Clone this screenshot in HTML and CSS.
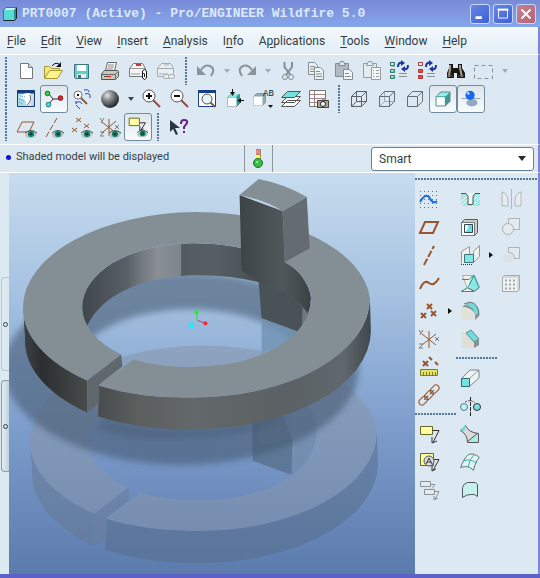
FILE: index.html
```
<!DOCTYPE html>
<html lang="en">
<head>
<meta charset="utf-8">
<title>PRT0007 (Active) - Pro/ENGINEER Wildfire 5.0</title>
<link rel="stylesheet" href="styles.css">
</head>
<body>
<svg class="defs" aria-hidden="true">
  <defs>
    <symbol id="eye" viewBox="0 0 12 10"><path d="M0 5Q6-1 12 4L10 8Q5 10 1 8Z" fill="#b9c4c0"/><path d="M0 4Q6-1 12 4" fill="none" stroke="#4c5654"/><circle cx="6" cy="5" r="3" fill="#087a68"/><circle cx="6" cy="5" r="1" fill="#022"/></symbol>
    <symbol id="swap" viewBox="0 0 14 12"><path d="M2 7Q2 2 6 3M12 5Q12 10 8 9" fill="none" stroke="#1c35a5" stroke-width="2"/><path d="M5 0l4 3-4 3zM9 6l-4 3 4 3z" fill="#1c35a5"/></symbol>
  </defs>
</svg>
<div class="window">
  <header class="titlebar">
    <svg class="app-icon" viewBox="0 0 14 14"><path d="M1 3h10v10H1z" fill="#56dcd3"/><path d="M1 3l2-2h10l-2 2z" fill="#c5f6f0"/><path d="M11 3l2-2v10l-2 2z" fill="#2b8d93"/><path d="M.5 13.500h11l2-2V.500" fill="none" stroke="#122"/><path d="M.5 13V3L3 .500h10" fill="none" stroke="#456f88"/></svg>
    <h1>PRT0007 (Active) - Pro/ENGINEER Wildfire 5.0</h1>
    <div class="caption">
      <button aria-label="Minimize"><svg viewBox="0 0 20 20"><path d="M5 14h7" stroke="#fff" stroke-width="3"/></svg></button>
      <button aria-label="Maximize"><svg viewBox="0 0 20 20"><path d="M5 5.500h10v9H5z" fill="none" stroke="#fff"/><path d="M4 5h12" stroke="#fff" stroke-width="2"/></svg></button>
      <button class="close" aria-label="Close"><svg viewBox="0 0 20 20"><path d="M5 5l10 10M15 5L5 15" stroke="#fff" stroke-width="2"/></svg></button>
    </div>
  </header>
  <nav class="menu">
    <a href="#"><u>F</u>ile</a><a href="#"><u>E</u>dit</a><a href="#"><u>V</u>iew</a><a href="#"><u>I</u>nsert</a><a href="#"><u>A</u>nalysis</a><a href="#">I<u>n</u>fo</a><a href="#">A<u>p</u>plications</a><a href="#"><u>T</u>ools</a><a href="#"><u>W</u>indow</a><a href="#"><u>H</u>elp</a>
  </nav>
  <div class="toolbars">
    <div class="bar">
      <span class="grip"></span>
      <button class="tool" aria-label="New"><svg viewBox="0 0 28 28"><path d="M8.500 6.500h8l4 4v11h-12z" fill="#fff" stroke="#777"/><path d="M16.500 6.500v4h4" fill="#ddd" stroke="#777"/></svg></button>
      <button class="tool" aria-label="Open"><svg viewBox="0 0 28 28"><path d="M4.500 21.500v-12h5l2 2h8v3" fill="#f3e877" stroke="#a79635"/><path d="M4.500 21.500l5-8h13l-5 8z" fill="#fff489" stroke="#a79635"/><path d="M12 9q4-5 8-1" fill="none" stroke="#111"/><path d="M21 5v5h-5z" fill="#111"/></svg></button>
      <button class="tool" aria-label="Save"><svg viewBox="0 0 28 28"><path d="M6.500 7.500h14v14h-13l-1-1z" fill="#5bd0cf" stroke="#456f7c"/><path d="M9 8h9v6H9z" fill="#fff"/><path d="M9 17h9v4H9z" fill="#e4eff0"/><path d="M10 18h3v3h-3z" fill="#456f7c"/></svg></button>
      <button class="tool" aria-label="Print"><svg viewBox="0 0 28 28"><path d="M9.500 14l2-8.500h9l-2 8.500" fill="#fff" stroke="#666"/><path d="M12 8h6M12 10h6M11 12h6" stroke="#888"/><path d="M5.500 17l3-3.500h13l1 1v5l-3 3h-14z" fill="#c9c7bd" stroke="#555"/><path d="M6 17.500h13l3-3M19.500 17.500v4" fill="none" stroke="#666"/><path d="M8 19.500h2" stroke="#087c35"/><path d="M10 19.500h5" stroke="#c31c1c"/></svg></button>
      <button class="tool" aria-label="Mail attachment"><svg viewBox="0 0 28 28"><path d="M5.500 19.500v-8l4-5h9l3 5v8z" fill="#f6f6f6" stroke="#777"/><path d="M5.500 11.500h16M7 17h9" stroke="#999"/><path d="M12 8h5" stroke="#c43939" stroke-width="2"/><path d="M18.500 19v-5q2-3 4 0v7q-2 3-4 0v-4q1-2 2 0v3" fill="#fff" stroke="#111"/></svg></button>
      <button class="tool" aria-label="Mail link"><svg viewBox="0 0 28 28"><g fill="#e9eef1" stroke="#a4abb0"><path d="M5.500 19.500v-8l4-5h9l3 5v8z"/><path d="M5.500 11.500h16M7 17h9"/><path d="M12 8h5"/><rect x="11.500" y="17.500" width="6" height="4" rx="2"/><rect x="16.500" y="17.500" width="6" height="4" rx="2"/></g></svg></button>
      <span class="grip"></span>
      <button class="tool" aria-label="Undo"><svg viewBox="0 0 28 28"><path d="M9 13q4-6 9-4 6 3 1 10" fill="none" stroke="#8c949a" stroke-width="2"/><path d="M5 9v9h9z" fill="#8c949a"/></svg></button>
      <button class="drop off" aria-label="Undo list"></button>
      <button class="tool" aria-label="Redo"><svg viewBox="0 0 28 28"><path d="M19 13q-4-6-9-4-6 3-1 10" fill="none" stroke="#8c949a" stroke-width="2"/><path d="M23 9v9h-9z" fill="#8c949a"/></svg></button>
      <button class="drop off" aria-label="Redo list"></button>
      <button class="tool" aria-label="Cut"><svg viewBox="0 0 28 28"><g fill="none" stroke="#858d93"><path d="M10.500 5v5l6 8M18 5v5l-6 8" stroke-width="2"/><circle cx="11" cy="20" r="2.500"/><circle cx="17" cy="20" r="2.500"/></g></svg></button>
      <button class="tool" aria-label="Copy"><svg viewBox="0 0 28 28"><g fill="#edf2f5" stroke="#858d93"><path d="M6.500 5.500h6l3 3v9h-9z"/><path d="M8 9.500h5M8 12h5M8 14.500h5"/><path d="M12.500 10.500h6l3 3v9h-9z"/><path d="M14 14.500h4M14 17h6M14 19.500h6"/></g></svg></button>
      <button class="tool" aria-label="Paste"><svg viewBox="0 0 28 28"><g stroke="#858d93"><path d="M5.500 6.500h13v13h-13z" fill="#b1bac0"/><path d="M8.500 8.500l2-4h3l2 4z" fill="#dde3e6"/><path d="M13.500 12.500h6l3 3v7h-9z" fill="#f1f5f7"/><path d="M15 16.500h4M15 19.500h6"/></g></svg></button>
      <button class="tool" aria-label="Paste special"><svg viewBox="0 0 28 28"><g fill="#e5ecef" stroke="#959ca1"><path d="M5.500 6.500h13v14h-13z"/><path d="M8.500 8.500l2-4h3l2 4z"/><path d="M13.500 10.500h9v12h-9z" fill="#f5f7f8"/><path d="M15 13.500h1M18 13.500h3M15 16.500h1M18 16.500h3M15 19.500h1M18 19.500h3"/></g></svg></button>
      <button class="tool" aria-label="Regenerate"><svg viewBox="0 0 28 28"><g fill="#eef" stroke="#35685d"><path d="M4.500 5.500h4v3h-4zM4.500 12.500h4v3h-4zM4.500 18.500h4v3h-4z"/></g><path d="M5 9h4M5 15h4M5 21h4M8 5v4M8 12v4M8 18v4" stroke="#18a67a"/><path d="M13 16.500h8M13 19.500h8" stroke="#8a9298"/><use href="#swap" x="10" y="3" width="14" height="12"/></svg></button>
      <button class="tool" aria-label="Regenerate manager"><svg viewBox="0 0 28 28"><g stroke="#b83434"><path d="M4.500 5.500h4v3h-4z" fill="#fff"/><path d="M4.500 12.500h4v3h-4zM4.500 18.500h4v3h-4z" fill="#ec4545"/></g><path d="M13 16.500h8M13 19.500h8" stroke="#8a9298"/><use href="#swap" x="10" y="3" width="14" height="12"/></svg></button>
      <button class="tool" aria-label="Find"><svg viewBox="0 0 28 28"><path d="M7 7h4v4h5V7h4v4l3 5v5h-8v-5h-3v5H5v-5l2-5z" fill="#191715"/><path d="M8 8v3l-1 9M18 8v3l2 9" fill="none" stroke="#aaa092" stroke-width="2"/><path d="M5 19h6M16 19h6" stroke="#62594c"/></svg></button>
      <button class="tool" aria-label="Select"><svg viewBox="0 0 28 28"><path d="M4.500 8.500h18v13h-18z" fill="none" stroke="#8b9297" stroke-dasharray="4 3"/></svg></button>
      <button class="drop off" aria-label="Selection list"></button>
    </div>
    <div class="bar">
      <span class="grip"></span>
      <button class="tool" aria-label="Repaint"><svg viewBox="0 0 28 28"><path d="M5.500 5.500h17v16h-17z" fill="#a9dcea" stroke="#173b7b"/><path d="M5 7h18" stroke="#173b7b" stroke-width="3"/><path d="M7 12q8-6 12-3l3 1-3 11-5-1q1-6-7-8z" fill="#fff"/><path d="M18 9l4 1-2 11h-4q4-5 2-12" fill="#d5dde0"/><path d="M18 10q2 6-3 10" fill="none" stroke="#58727d"/><path d="M8 11l5 1M7 14l5 2M7 17l4 2" stroke="#5d93c8" stroke-dasharray="1 1"/></svg></button>
      <button class="tool on" aria-label="Spin center"><svg viewBox="0 0 28 28"><path d="M8 8l5 6h7M13 14l-5 6" fill="none" stroke="#222"/><circle cx="7" cy="8" r="2.500" fill="#35d33d" stroke="#176a1b"/><circle cx="21" cy="13" r="2.500" fill="#e42626" stroke="#711"/><circle cx="8" cy="20" r="2.500" fill="#42dce4" stroke="#16707b"/></svg></button>
      <button class="tool" aria-label="Orient mode"><svg viewBox="0 0 28 28"><circle cx="10" cy="10" r="4" fill="#fff" stroke="#777"/><path d="M13 13l6 6" stroke="#8b5b38" stroke-width="2"/><path d="M16 5q5-1 5 2M17 9q6-2 5 4M8 18q4-3 6 1M8 19v-3M8 20l4 4" fill="none" stroke="#2842b4"/><path d="M9 10h2" stroke="#111" stroke-width="2"/></svg></button>
      <button class="tool" aria-label="Appearance"><svg viewBox="0 0 28 28"><defs><radialGradient id="ball" cx=".35" cy=".3" r=".7"><stop stop-color="#e3e3e3"/><stop offset=".4" stop-color="#878b8e"/><stop offset="1" stop-color="#25282a"/></radialGradient></defs><circle cx="14" cy="14" r="9" fill="url(#ball)"/></svg></button>
      <button class="drop" aria-label="Appearance list"></button>
      <button class="tool" aria-label="Zoom in"><svg viewBox="0 0 28 28"><path d="M16 15l7 7" stroke="#8b5048" stroke-width="2"/><circle cx="12" cy="11" r="6" fill="#fff" stroke="#555"/><path d="M9 11h6M12 8v6" stroke="#111" stroke-width="2"/></svg></button>
      <button class="tool" aria-label="Zoom out"><svg viewBox="0 0 28 28"><path d="M16 15l7 7" stroke="#8b5048" stroke-width="2"/><circle cx="12" cy="11" r="6" fill="#fff" stroke="#555"/><path d="M9 11h6" stroke="#111" stroke-width="2"/></svg></button>
      <button class="tool" aria-label="Refit"><svg viewBox="0 0 28 28"><path d="M5.500 5.500h17v16h-17z" fill="#fff" stroke="#183b8a"/><path d="M5 6.500h18" stroke="#183b8a" stroke-width="3"/><path d="M17 17l5 5" stroke="#8b5048" stroke-width="2"/><circle cx="14" cy="14" r="5" fill="#e8f3f6" stroke="#555"/></svg></button>
      <button class="tool" aria-label="Reorient"><svg viewBox="0 0 28 28"><path d="M6.500 12.500l3-3h9v9l-3 3h-9z" fill="#2c9c9a" stroke="#777"/><path d="M6.500 12.500h9v9h-9z" fill="#fff"/><path d="M7 12l3-3h8l-3 3z" fill="#87e7e2"/><path d="M11.500 4v5M23 15.500h-4" stroke="#111"/><path d="M9 7h5l-2.500 4zM20 13v5l-4-2.500z" fill="#111"/></svg></button>
      <button class="tool" aria-label="Saved views"><svg viewBox="0 0 28 28"><path d="M4.500 11.500l3-3h9v9l-3 3h-9z" fill="#92aaad" stroke="#999"/><path d="M4.500 11.500h9v9h-9z" fill="#fff"/><text x="14" y="11" class="icon-label">AB</text><path d="M19 20h5l-2.500 3z" fill="#111"/></svg></button>
      <button class="tool" aria-label="Layers"><svg viewBox="0 0 28 28"><path d="M4.500 21.500l6-6h13l-6 6zM4.500 17.500l6-6h13l-6 6z" fill="#fff" stroke="#555"/><path d="M4.500 12.500l6-6h13l-6 6z" fill="#75e1dd" stroke="#4c5858"/></svg></button>
      <button class="tool" aria-label="View manager"><svg viewBox="0 0 28 28"><path d="M4.500 5.500h16v16h-16z" fill="#fff" stroke="#777"/><path d="M5 9.500h15M5 13.500h15M5 17.500h15M9.500 6v15" stroke="#a18185"/><path d="M12 16h4l1-2h4l1 2h2v7H12z" fill="#aaa58c"/><path d="M12.500 15.500h11v7h-11z" fill="none" stroke="#444"/><circle cx="18" cy="19" r="2.500" fill="#fff" stroke="#222"/></svg></button>
      <span class="grip"></span>
      <button class="tool" aria-label="Wireframe"><svg viewBox="0 0 28 28"><path d="M6.500 11.500h10v10h-10zM11.500 6.500h10v10h-10zM6.500 11.500l5-5M16.500 11.500l5-5M16.500 21.500l5-5M6.500 21.500l5-5" fill="none" stroke="#5b6369"/></svg></button>
      <button class="tool" aria-label="Hidden line"><svg viewBox="0 0 28 28"><path d="M11.500 6v10.500h10M6.500 21.500l5-5" fill="none" stroke="#a4aaaf"/><path d="M6.500 11.500h10v10h-10zl5-5h10v10l-5 5M16.500 11.500l5-5" fill="none" stroke="#666e74"/></svg></button>
      <button class="tool" aria-label="No hidden"><svg viewBox="0 0 28 28"><path d="M6.500 11.500h10v10h-10zl5-5h10v10l-5 5M16.500 11.500l5-5" fill="none" stroke="#666e74"/></svg></button>
      <button class="tool on" aria-label="Shading"><svg viewBox="0 0 28 28"><path d="M6.500 11.500l5-5h10v10l-5 5h-10z" fill="#3f9a97" stroke="#57777a"/><path d="M7 12h9v9H7z" fill="#fff"/><path d="M7 11l5-4h9l-4 4z" fill="#91f1e7"/></svg></button>
      <button class="tool on" aria-label="Enhanced realism"><svg viewBox="0 0 28 28"><ellipse cx="15" cy="18" rx="6" ry="4" fill="#8ea8c5"/><path d="M4 13.500h20" stroke="#8f9aa2"/><circle cx="13" cy="10" r="5" fill="#1768ee"/><circle cx="11" cy="8" r="1.500" fill="#b0dcff"/></svg></button>
    </div>
    <div class="bar">
      <span class="grip"></span>
      <button class="tool" aria-label="Plane display"><svg viewBox="0 0 28 28"><path d="M5 19l5-10h12l-5 10z" fill="none" stroke="#9a552e"/><use href="#eye" x="13" y="16" width="12" height="10"/></svg></button>
      <button class="tool" aria-label="Axis display"><svg viewBox="0 0 28 28"><path d="M6 24L17 5" stroke="#9a552e" stroke-dasharray="6 2"/><use href="#eye" x="12" y="16" width="12" height="10"/></svg></button>
      <button class="tool" aria-label="Point display"><svg viewBox="0 0 28 28"><path d="M8 5l5 4M13 5l-5 4M4 15l5 4M9 15l-5 4M16 11l5 4M21 11l-5 4" stroke="#9a552e"/><use href="#eye" x="13" y="16" width="12" height="10"/></svg></button>
      <button class="tool" aria-label="Coordinate display"><svg viewBox="0 0 28 28"><path d="M13 6v17M6 20L20 8M6 9l14 11" stroke="#9a552e"/><path d="M4 5l2 3M8 5l-3 5M19 12l4 4M23 12l-4 4M4 19h4l-4 4h4" fill="none" stroke="#777f84"/><use href="#eye" x="13" y="16" width="12" height="10"/></svg></button>
      <button class="tool on" aria-label="Annotation display"><svg viewBox="0 0 28 28"><path d="M4.500 4.500h11v8h-11z" fill="#fffda4" stroke="#626421"/><path d="M16 9.500h6l-5 8M16 13v5l4-2" fill="none" stroke="#222"/><use href="#eye" x="13" y="16" width="12" height="10"/></svg></button>
      <span class="grip"></span>
      <button class="tool" aria-label="Context help"><svg viewBox="0 0 28 28"><path d="M6 7v12l3-3 3 6 2-1-3-6h5z" fill="#29363d"/><path d="M17 11q0-4 3-4 4 0 3 3l-3 4v2M20 18v2" fill="none" stroke="#701b81" stroke-width="2"/></svg></button>
    </div>
  </div>
  <div class="status">
    <p><span class="dot"></span>Shaded model will be displayed</p>
    <div class="lamp"><svg viewBox="0 0 14 22"><path d="M5 1h5v10H5z" fill="#a78d59"/><path d="M5 2h4v4H5z" fill="#e9868b"/><path d="M5 7h4v4H5z" fill="#fff56a"/><circle cx="7" cy="15" r="4.500" fill="#3cbd4b" stroke="#167026"/><circle cx="6" cy="14" r="1" fill="#a3f7a5"/></svg></div>
    <div class="filter"><select aria-label="Selection filter"><option>Smart</option></select></div>
  </div>
  <main class="work">
    <aside class="sashes"><button class="sash plain" aria-label="Open browser"></button><button class="sash" aria-label="Open model tree"></button></aside>
    <svg class="model" viewBox="9 173 406 400" preserveAspectRatio="xMinYMin slice" role="img" aria-label="Split ring model">
      <defs>
        <linearGradient id="sky" x2="0" y2="1"><stop stop-color="#c7dcef"/><stop offset=".32" stop-color="#a3c0e0"/><stop offset=".65" stop-color="#7b9bcb"/><stop offset="1" stop-color="#5a7bac"/></linearGradient>
        <linearGradient id="wall" gradientUnits="userSpaceOnUse" x1="82" x2="310" y1="0" y2="0"><stop stop-color="#3f474c"/><stop offset=".2" stop-color="#596167"/><stop offset=".24" stop-color="#6c7378"/><stop offset=".33" stop-color="#898f94"/><stop offset=".43" stop-color="#7f868b"/><stop offset=".435" stop-color="#535b60"/><stop offset=".58" stop-color="#575f64"/><stop offset=".8" stop-color="#454d51"/><stop offset="1" stop-color="#292d30"/></linearGradient>
        <linearGradient id="rim" gradientUnits="userSpaceOnUse" x1="98" x2="370" y1="0" y2="0"><stop stop-color="#484c4d"/><stop offset=".15" stop-color="#5c5f5e"/><stop offset=".35" stop-color="#63686a"/><stop offset=".7" stop-color="#5b6164"/><stop offset=".9" stop-color="#60686d"/><stop offset="1" stop-color="#41484b"/></linearGradient>
        <linearGradient id="rimLeft" x2="1"><stop stop-color="#3c4143"/><stop offset=".3" stop-color="#2b2f31"/><stop offset="1" stop-color="#484b4a"/></linearGradient>
        <linearGradient id="post" x2="1"><stop stop-color="#3d4447"/><stop offset=".6" stop-color="#50585c"/><stop offset="1" stop-color="#3b4245"/></linearGradient>
        <filter id="soft" x="-10%" y="-10%" width="120%" height="120%"><feGaussianBlur stdDeviation="3"/></filter>
        <path id="face" d="M87 380A173 93 0 0 1 23 307A175 95 0 0 1 196 212A175 92 0 0 1 369 298A177 99 0 0 1 190 397A175 93 0 0 1 98 385L133 359A114 62 0 0 0 200 366A113 67 0 0 0 310 298A118 56 0 0 0 190 243A110 64 0 0 0 82 307A114 62 0 0 0 121 354Z"/>
        <path id="rimFront" d="M98 385A175 93 0 0 0 190 397A177 99 0 0 0 369 298L370 331A179 99 0 0 1 190 429A175 93 0 0 1 98 416Z"/>
        <path id="rimSide" d="M23 307A173 93 0 0 0 87 380V412A175 94 0 0 1 25 337Z"/>
        <path id="cut" d="M87 380L121 354L122 366L99 384V403L87 412Z"/>
      </defs>
      <path d="M9 173h406v400H9z" fill="url(#sky)"/>
      <g opacity=".52">
        <path d="M252 422l40-20v38l-2 34-38-14z" fill="#596f87"/>
        <g transform="translate(7 133)">
          <use href="#face" fill="#8796aa"/>
          <use href="#rimFront" fill="#586e8a"/>
          <use href="#rimSide" fill="#667991"/>
          <use href="#cut" fill="#6a7c94"/>
        </g>
        <path d="M258 400Q314 386 316 430Q315 455 293 473V438L258 445Z" fill="#71869b"/>
      </g>
      <path d="M252 422l30-9 10 27v34l-40-14z" fill="#526a83" opacity=".4"/>
      <path d="M4 368A177 96 0 1 1 358 368A177 96 0 1 1 4 368M75 368A115 59 0 1 0 305 368A115 59 0 1 0 75 368" fill="#44586f" fill-rule="evenodd" opacity=".58" filter="url(#soft)"/>
      <path d="M100 418Q150 428 250 422L290 412Q260 436 190 437Q130 442 98 428Z" fill="#44586f" opacity=".4" filter="url(#soft)"/>
      <path d="M258 282Q287 286 307 313V319L297 331L261 318Z" fill="#495257"/>
      <path d="M302 303l5 8v10l-6 7z" fill="#70787d"/>
      <path d="M261 318l36 13q-13 15-36 22z" fill="#7192b1" opacity=".8"/>
      <path d="M87 325Q82 316 82 307A110 64 0 0 1 190 243A118 56 0 0 1 310 298Q310 306 307 313Q294 291 258 282Q228 274 190 275Q110 280 87 325Z" fill="url(#wall)"/>
      <use href="#rimFront" fill="url(#rim)"/>
      <use href="#rimSide" fill="url(#rimLeft)"/>
      <use href="#face" fill="#838e95"/>
      <use href="#cut" fill="#60686d"/>
      <path d="M239 195L282 211L284 262Q306 274 310 298Q308 306 307 313Q292 291 258 282L241 270Z" fill="url(#post)"/>
      <path d="M282 211L306 197L309 248L284 262Z" fill="#646c72"/>
      <path d="M239 195L258 179Q284 184 306 197L282 211Q264 200 239 195Z" fill="#838e95"/>
      <path d="M196.500 320v-8" stroke="#23df37"/><circle cx="196" cy="312" r="2" fill="#21f129"/>
      <path d="M197 320l8 3" stroke="#b4354a"/><circle cx="205" cy="323" r="2" fill="#eb3045"/>
      <circle cx="191" cy="325" r="3" fill="#2ae7f5"/>
    </svg>
    <aside class="features">
      <div class="rule"></div>
      <div class="columns">
        <div class="column">
          <button class="tool" aria-label="Sketch"><svg viewBox="0 0 28 28"><path d="M5 6.500h19M5 10.500h19M5 14.500h19M5 18.500h19M5 22.500h19" stroke="#60718d" stroke-dasharray="1 3"/><path d="M5 17q5-9 9-5 4 8 8 4" fill="none" stroke="#176fd9" stroke-width="2"/></svg></button>
          <button class="tool" aria-label="Plane"><svg viewBox="0 0 28 28"><path d="M5 20l5-11h13l-5 11z" fill="none" stroke="#9a552e" stroke-width="2"/></svg></button>
          <button class="tool" aria-label="Axis"><svg viewBox="0 0 28 28"><path d="M9 24L19 5" stroke="#9a552e" stroke-width="2" stroke-dasharray="7 2"/></svg></button>
          <button class="tool" aria-label="Curve"><svg viewBox="0 0 28 28"><path d="M5 20Q9 10 14 14q5 4 10-5" fill="none" stroke="#9a552e" stroke-width="2"/></svg></button>
          <div class="pair"><button class="tool" aria-label="Point"><svg viewBox="0 0 28 28"><path d="M12 7l5 5M17 7l-5 5M6 16l5 5M11 16l-5 5M16 14l5 5M21 14l-5 5" stroke="#9a552e" stroke-width="2"/></svg></button><button class="fly" aria-label="More points"></button></div>
          <button class="tool" aria-label="Coordinate system"><svg viewBox="0 0 28 28"><path d="M14 6v17M7 20L21 9M7 9l14 11" stroke="#9a552e"/><path d="M4 5l2 3M8 5l-3 5M20 12l4 4M24 12l-4 4M4 19h4l-4 4h4" fill="none" stroke="#737b80"/></svg></button>
          <button class="tool" aria-label="Analysis"><svg viewBox="0 0 28 28"><path d="M8 8l5 5M13 8l-5 5M14 4l3 3M20 9l3 3" stroke="#9a552e" stroke-width="2"/><path d="M5.500 16.500h17v6h-17z" fill="#e5e365" stroke="#807b2a"/><path d="M8.500 19v3M11.500 19v3M14.500 19v3M17.500 19v3M20.500 19v3" stroke="#807b2a"/></svg></button>
          <button class="tool" aria-label="Reference"><svg viewBox="0 0 28 28"><g transform="rotate(-45 14 14)" fill="none" stroke="#9a552e"><rect x="1" y="11" width="10" height="6" rx="3"/><rect x="9" y="11" width="10" height="6" rx="3"/><rect x="17" y="11" width="10" height="6" rx="3"/><path d="M7 14h6M15 14h6"/></g></svg></button>
          <div class="rule"></div>
          <button class="tool" aria-label="Annotation"><svg viewBox="0 0 28 28"><path d="M5.500 6.500h12v8h-12z" fill="#fffda4" stroke="#666826"/><path d="M18 10.500h6l-6 12M17 17v6l5-2" fill="none" stroke="#333"/></svg></button>
          <button class="tool" aria-label="Annotation feature"><svg viewBox="0 0 28 28"><path d="M5.500 5.500h13v12h-13z" fill="#fffda4" stroke="#666826"/><circle cx="14" cy="13" r="5" fill="#ddd" stroke="#555"/><path d="M11 16l3-6 3 6M12 14h4M19 11.500h5l-6 11M17 18v5l4-2" fill="none" stroke="#333"/></svg></button>
          <button class="tool" aria-label="Annotation elements"><svg viewBox="0 0 28 28"><path d="M5.500 5.500h10v5h-10zM9.500 13.500h10v5h-10zM15 8.500h5l-3 4M20 15.500h4l-4 8M19 20v4l4-2" fill="#e5eaed" stroke="#8b9297"/></svg></button>
        </div>
        <div class="column">
          <button class="tool" aria-label="Hole"><svg viewBox="0 0 28 28"><path d="M5 8h19v13H5z" fill="#9ce9e5"/><path d="M5 17l7-7M5 21l7-7M16 21l8-8M18 15l5-5" stroke="#fff"/><path d="M9 8h11l-3 3v9h-5v-9z" fill="#eef6f8"/><path d="M5 8.500h5l2 3v8h5v-8l2-3h5" fill="none" stroke="#4c5558"/></svg></button>
          <button class="tool" aria-label="Shell"><svg viewBox="0 0 28 28"><path d="M5.500 9.500l3-3h13v13l-3 3h-13z" fill="#c8cfcc" stroke="#555d60"/><path d="M5.500 9.500h13v13h-13z" fill="#fff" stroke="#777"/><path d="M8.500 11.500h8v8h-8z" fill="#72dcd8" stroke="#345"/><path d="M9 12h3v4l-3 3z" fill="#eafffb"/></svg></button>
          <div class="pair"><button class="tool" aria-label="Rib"><svg viewBox="0 0 28 28"><path d="M5.500 22.500v-12l8-5v13M17.500 21.500v-11l6-6v11z" fill="#f0f1ef" stroke="#999"/><path d="M8.500 13.500h9v8h-9z" fill="#7deaea" stroke="#427477"/><path d="M5 23.500h12" stroke="#333" stroke-dasharray="1 1"/></svg></button><button class="fly" aria-label="More ribs"></button></div>
          <button class="tool" aria-label="Draft"><svg viewBox="0 0 28 28"><path d="M6.500 6.500h12l5 12-5 4H6l5-4z" fill="#f1f0e9" stroke="#a9b0ae"/><path d="M13 14l4-8 6 12-5 4-3-1z" fill="#8be7e2"/><path d="M5 22.500h13l5-4-5-12-6 12-7 4M6 10.500h7l4-4" fill="none" stroke="#249895"/><path d="M12 19l6 3" stroke="#465e60"/></svg></button>
          <button class="tool" aria-label="Round"><svg viewBox="0 0 28 28"><path d="M6 10l8-5q9 2 9 14l-4 4q2-9-7-12z" fill="#888f90"/><path d="M6 10q12 0 13 13H6z" fill="#e3e2d9"/><path d="M10 8l5-3q8 3 8 11l-4 2q-1-8-9-10z" fill="#6edbda"/><path d="M8 7l6-2q9 2 9 13" fill="none" stroke="#6d7779"/></svg></button>
          <button class="tool" aria-label="Chamfer"><svg viewBox="0 0 28 28"><path d="M6 7h9l8 9v4l-5 3H6z" fill="#dedfd8"/><path d="M10 8l5-3 8 9-5 3z" fill="#72dddd" stroke="#56898b"/><path d="M18 17l5-3v6l-5 3z" fill="#899294"/></svg></button>
          <div class="rule"></div>
          <button class="tool" aria-label="Extrude"><svg viewBox="0 0 28 28"><path d="M6 14l8-8h9v8l-9 8" fill="#edf2f2" stroke="#7b8588"/><path d="M14 14l9-8" stroke="#777" stroke-dasharray="2 1"/><path d="M5.500 14.500h8v8h-8z" fill="#73e2e2" stroke="#326c70"/></svg></button>
          <button class="tool" aria-label="Revolve"><svg viewBox="0 0 28 28"><circle cx="8" cy="15" r="3.500" fill="#c7eef0" stroke="#458387"/><circle cx="21" cy="15" r="3.500" fill="#7bdee1" stroke="#333"/><path d="M9 10q6-3 10 1" fill="none" stroke="#555" stroke-dasharray="2 1"/><path d="M14.500 5v19" stroke="#222" stroke-dasharray="4 1"/></svg></button>
          <button class="tool" aria-label="Sweep"><svg viewBox="0 0 28 28"><path d="M9.500 5.500q3 7 13 8v9h-11q0-8-7-12z" fill="#dadbd7" stroke="#555"/><path d="M5 10l4-5v5l-2 2z" fill="#6eddde"/><path d="M12 22l10-9v9z" fill="#a8ece9"/><path d="M11 22l11-9" stroke="#555"/></svg></button>
          <button class="tool" aria-label="Boundary blend"><svg viewBox="0 0 28 28"><path d="M4.500 19.500q4-10 8-13 5-2 11 3-4 3-6 13-5-6-13-3z" fill="#dff7f4" stroke="#687377"/><path d="M12 19q2-9 6-12M7 13q6-3 14 2" fill="none" stroke="#41a8aa"/></svg></button>
          <button class="tool" aria-label="Style"><svg viewBox="0 0 28 28"><path d="M6.500 21.500v-10q1-4 5-5h8l2 2v12q-3-3-7-2-4 0-8 3z" fill="#c7f2ec" stroke="#4c595b"/></svg></button>
        </div>
        <div class="column">
          <button class="tool" aria-label="Mirror"><svg viewBox="0 0 28 28"><path d="M5 7q5 1 6 8v6H5zM24 7q-5 1-6 8v6h6zM14.500 4v20" fill="#e7ebed" stroke="#b2b9bd"/></svg></button>
          <button class="tool" aria-label="Merge"><svg viewBox="0 0 28 28"><path d="M11.500 5.500h11v11h-11z" fill="#e5eaed" stroke="#adb3b6"/><circle cx="11" cy="16" r="5.500" fill="#e5eaed" stroke="#adb3b6"/></svg></button>
          <button class="tool" aria-label="Trim"><svg viewBox="0 0 28 28"><circle cx="11" cy="17" r="5" fill="#dce3e7"/><path d="M11.500 6.500h11v11h-5q0-6-6-6z" fill="#e5eaed" stroke="#adb3b6"/></svg></button>
          <button class="tool" aria-label="Pattern"><svg viewBox="0 0 28 28"><path d="M5.500 8.500l2-2h15v14l-2 2h-15z" fill="#d3d8db" stroke="#a2a9ad"/><path d="M6 9h14v13H6z" fill="#f0f2f3"/><path d="M8 11.500h10M8 15.500h10M8 19.500h10" stroke="#a0a7ab" stroke-width="2" stroke-dasharray="2 2"/></svg></button>
        </div>
      </div>
    </aside>
  </main>
</div>
</body>
</html>
```
FILE: styles.css
```
* { box-sizing: border-box; }
body { margin: 0; background: #dce8f2; color: #333f47; font: 12px/16px Roboto, "Liberation Sans", sans-serif; }
button { padding: 0; border: 0; background: none; font: inherit; }
svg { display: block; }
.defs { position: absolute; width: 0; height: 0; }
.window { display: flex; flex-direction: column; min-height: 100vh; border-bottom: 4px solid #5b61c6; }

.titlebar { display: flex; align-items: center; gap: 5px; height: 27px; padding: 0 4px 0 3px; background: linear-gradient(#758bd9, #7f95de 40%, #85a8eb); }
.app-icon { width: 14px; height: 14px; }
.titlebar h1 { flex: 1; margin: 0; color: #dbe9ff; font: bold 13px/18px "Liberation Mono", monospace; white-space: nowrap; }
.caption { display: flex; gap: 3px; }
.caption button { width: 20px; height: 20px; border: 1px solid #c7d9fa; border-radius: 3px; background: linear-gradient(135deg, #6687e4, #3c60d5); }
.caption .close { background: linear-gradient(135deg, #c68190, #b46474); }
.caption svg { width: 18px; height: 18px; }

.menu { display: flex; align-items: center; gap: 15px; height: 28px; padding: 0 7px; border-right: 2px solid #7c86dc; border-bottom: 1px solid #fff; background: linear-gradient(#f3f9fd, #e3edf5); }
.menu a { color: #333c43; text-decoration: none; }
.menu u { text-underline-offset: 2px; }

.toolbars { padding: 2px 0 3px; border-right: 2px solid #7c86dc; border-bottom: 1px solid #fff; }
.bar { display: flex; height: 28px; }
.grip { width: 12px; display: flex; justify-content: center; }
.grip::before { content: ""; width: 3px; background: radial-gradient(circle at 1px 1px, #54779a 1px, transparent 1px) 0 0 / 3px 3px; }
.tool { width: 28px; height: 28px; flex: none; }
.tool svg { width: 28px; height: 28px; }
.tool.on { border: 1px solid #718b9e; border-radius: 3px; background: linear-gradient(#dce6ed, #f8fbfd); }
.tool.on svg { width: 26px; height: 26px; }
.drop { width: 13px; display: grid; place-items: center; }
.drop::before { content: ""; border: 3px solid transparent; border-top: 4px solid #3c464d; border-bottom: 0; }
.drop.off::before { border-top-color: #a3adb4; }
.icon-label { font: 9px "Liberation Mono", monospace; fill: #222; }

.status { display: grid; grid-template-columns: 243px 30px 1fr; height: 28px; border-right: 2px solid #7c86dc; border-bottom: 1px solid #fff; }
.status p { display: flex; align-items: center; gap: 5px; height: 24px; margin: 0; padding-left: 6px; font-size: 11px; }
.dot { width: 5px; height: 5px; border-radius: 50%; background: #1111dc; }
.lamp { display: grid; place-items: center; border: 2px ridge #dce8f0; border-width: 0 2px; }
.lamp svg { width: 14px; height: 22px; }
.filter { position: relative; padding: 2px 4px 1px 98px; }
.filter select { width: 100%; height: 24px; padding: 0 7px; border: 1px solid #688295; border-radius: 3px; background: #fff; color: inherit; font: inherit; appearance: none; }
.filter::after { content: ""; position: absolute; right: 12px; top: 11px; border: 4px solid transparent; border-top: 5px solid #222b31; border-bottom: 0; pointer-events: none; }

.work { flex: 1; display: grid; grid-template-columns: 9px 1fr 125px; }
.sashes { display: flex; flex-direction: column; gap: 9px; padding-top: 104px; background: #dce9f0; }
.sash { display: grid; place-items: center; height: 92px; margin-left: 1px; border: 1px solid #8b9ca8; border-right: 0; border-radius: 4px 0 0 4px; background: linear-gradient(90deg, #e4edf2, #c1d2de); }
.sash.plain { height: 94px; border-color: #b9cbd5; background: #dce9f0; }
.sash::before { content: ""; width: 3px; height: 3px; border: 1px solid #34434d; border-radius: 50%; }
.model { width: 100%; height: 100%; }
.features { padding-top: 1px; border-right: 2px solid #7c86dc; }
.rule { height: 11px; display: flex; align-items: center; }
.rule::before { content: ""; flex: 1; height: 3px; background: radial-gradient(circle at 1px 1px, #54779a 1px, transparent 1px) 0 0 / 3px 3px; }
.columns { display: grid; grid-template-columns: repeat(3, 41px); }
.column { display: flex; flex-direction: column; }
.pair { display: flex; }
.fly { width: 13px; display: grid; place-items: center; }
.fly::before { content: ""; border: 3px solid transparent; border-left: 4px solid #111; border-right: 0; }
```
